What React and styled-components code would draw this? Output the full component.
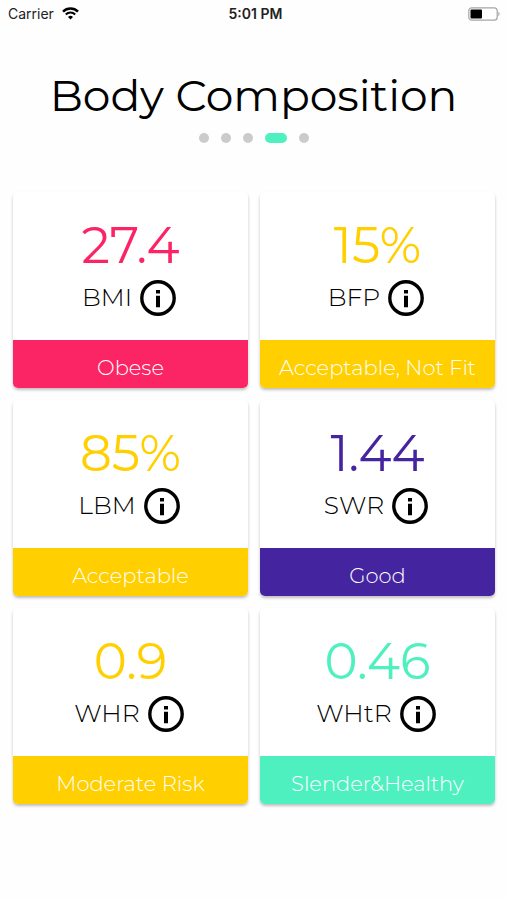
import React, { useState } from "react";
import styled, { createGlobalStyle } from "styled-components";

const GlobalStyle = createGlobalStyle`
  * {
    box-sizing: border-box;
  }
  body {
    margin: 0;
    background: #fefefe;
    color: #000;
    font-family: Montserrat, Inter, "Open Sans", sans-serif;
  }
  button {
    padding: 0;
    border: none;
    background: none;
    color: inherit;
    cursor: pointer;
  }
`;

const StatusBar = styled.header`
  display: grid;
  grid-template-columns: 1fr auto 1fr;
  align-items: center;
  height: 27px;
  padding: 0 7px 0 8px;
  font-family: Inter, sans-serif;
  font-size: 14px;
  color: #222;
`;

const Carrier = styled.div`
  display: flex;
  align-items: center;
  gap: 8px;
`;

const Time = styled.div`
  padding-left: 3px;
  font-weight: 600;
`;

const BatteryIcon = styled.svg`
  justify-self: end;
`;

const Title = styled.h1`
  margin: 40px 0 0;
  font-size: 44px;
  font-weight: 400;
  line-height: 56px;
  text-align: center;
`;

const Dots = styled.nav`
  display: flex;
  justify-content: center;
  gap: 12px;
  margin-top: 10px;
`;

const Dot = styled.button`
  width: ${(props) => (props.$active ? "22px" : "10px")};
  height: 10px;
  border-radius: 5px;
  && {
    background: ${(props) => (props.$active ? "#4ff0bf" : "#cbcbcb")};
  }
`;

const Cards = styled.main`
  display: grid;
  grid-template-columns: 1fr 1fr;
  gap: 12px;
  padding: 49px 12px 40px 13px;
`;

const Card = styled.section`
  border-radius: 5px;
  background: #fff;
  box-shadow: 0 2px 3px rgba(0, 0, 0, 0.25);
  overflow: hidden;
`;

const CardBody = styled.div`
  display: flex;
  flex-direction: column;
  align-items: center;
  gap: 6px;
  padding: 26px 0 24px;
`;

const Value = styled.div`
  font-size: 50px;
  line-height: 56px;
  color: ${(props) => props.$color};
`;

const LabelRow = styled.div`
  display: flex;
  align-items: center;
  gap: 8px;
  padding-right: 3px;
  font-size: 25px;
  font-weight: 300;
  line-height: 34px;
`;

const Label = styled.span`
  padding-bottom: 2px;
`;

const InfoButton = styled.button`
  display: flex;
`;

const CardFooter = styled.div`
  height: 48px;
  padding-top: 8px;
  background: ${(props) => props.$color};
  color: #fff;
  font-size: 21px;
  font-weight: 300;
  line-height: 40px;
  text-align: center;
`;

const pink = "#fb2464";
const yellow = "#ffcf00";
const purple = "#45259f";
const green = "#4ff0bf";

const measures = [
  { label: "BMI", value: "27.4", status: "Obese", color: pink },
  { label: "BFP", value: "15%", status: "Acceptable, Not Fit", color: yellow },
  { label: "LBM", value: "85%", status: "Acceptable", color: yellow },
  { label: "SWR", value: "1.44", status: "Good", color: purple },
  { label: "WHR", value: "0.9", status: "Moderate Risk", color: yellow },
  { label: "WHtR", value: "0.46", status: "Slender&Healthy", color: green },
];

function Wifi() {
  return (
    <svg width="17" height="13" viewBox="0 0 17 13" fill="none" stroke="#000">
      <path d="M1 4.6a10.6 10.6 0 0 1 15 0" strokeWidth="2.4" />
      <path d="M3.8 7.5a6.7 6.7 0 0 1 9.4 0" strokeWidth="2.1" />
      <path
        d="M8.5 12.4 6 9.9a3.6 3.6 0 0 1 5 0z"
        fill="#000"
        stroke="none"
      />
    </svg>
  );
}

function Battery() {
  return (
    <BatteryIcon width="32" height="14" viewBox="0 0 32 14">
      <rect
        x="0.8"
        y="0.8"
        width="28.4"
        height="12.4"
        rx="3"
        fill="#fff"
        stroke="#a6a6a6"
        strokeWidth="1.2"
      />
      <rect x="2.5" y="2.5" width="11.5" height="9" rx="1" fill="#000" />
      <path d="M30.3 4.8c1.6.6 1.6 3.8 0 4.4z" fill="#a6a6a6" />
    </BatteryIcon>
  );
}

function InfoIcon() {
  return (
    <svg width="36" height="36" viewBox="0 0 36 36">
      <circle
        cx="18"
        cy="18"
        r="16.2"
        fill="none"
        stroke="#000"
        strokeWidth="3.4"
      />
      <path d="M16 10h4v3.6h-4zM16 15.7h4v11.6h-4z" />
    </svg>
  );
}

function Measure({ label, value, status, color }) {
  return (
    <Card>
      <CardBody>
        <Value $color={color}>{value}</Value>
        <LabelRow>
          <Label>{label}</Label>
          <InfoButton aria-label={"About " + label}>
            <InfoIcon />
          </InfoButton>
        </LabelRow>
      </CardBody>
      <CardFooter $color={color}>{status}</CardFooter>
    </Card>
  );
}

function App() {
  const [page, setPage] = useState(3);

  return (
    <>
      <GlobalStyle />
      <StatusBar>
        <Carrier>
          Carrier <Wifi />
        </Carrier>
        <Time>5:01 PM</Time>
        <Battery />
      </StatusBar>
      <Title>Body Composition</Title>
      <Dots>
        {[0, 1, 2, 3, 4].map((i) => (
          <Dot
            key={i}
            $active={i === page}
            aria-label={"Page " + (i + 1)}
            onClick={() => setPage(i)}
          />
        ))}
      </Dots>
      <Cards>
        {measures.map((m) => (
          <Measure key={m.label} {...m} />
        ))}
      </Cards>
    </>
  );
}

export default App;
